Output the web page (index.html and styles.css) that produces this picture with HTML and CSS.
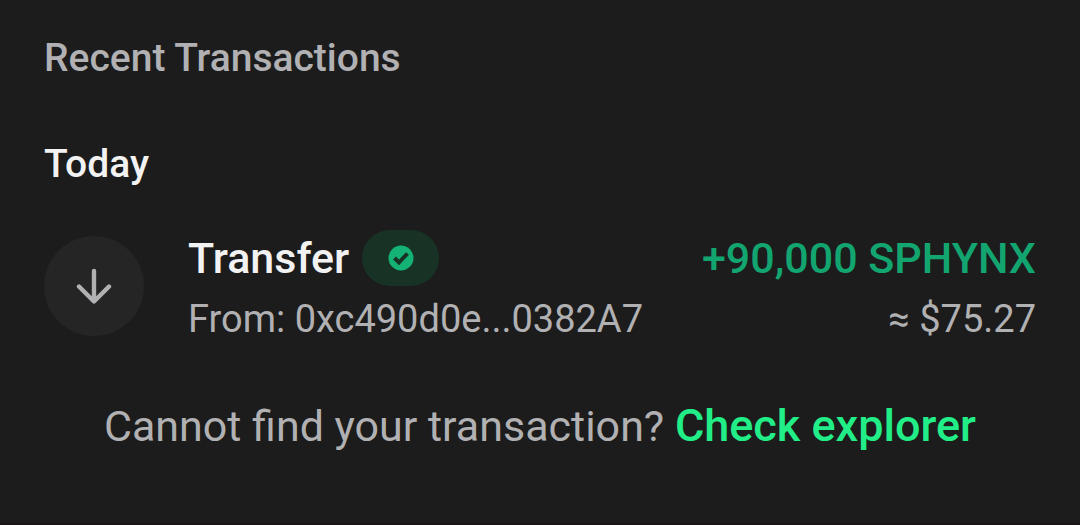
FILE: index.html
```html
<!DOCTYPE html>
<html lang="en">
<head>
    <meta charset="UTF-8">
    <meta name="viewport" content="width=device-width, initial-scale=1.0">
    <title>Recent Transactions</title>
    <link rel="stylesheet" href="styles.css">
</head>
<body>
    <main class="transactions">
        <h1 class="title">Recent Transactions</h1>
        <h2 class="day">Today</h2>

        <ul class="list">
            <li class="item">
                <span class="item-icon">
                    <svg width="36" height="36" viewBox="0 0 36 36" fill="none" stroke="currentColor" stroke-width="4.4" stroke-linecap="round" stroke-linejoin="round" aria-hidden="true">
                        <path d="M18 3v30M3 18.500l15 15 15-15"/>
                    </svg>
                </span>
                <div class="item-info">
                    <div class="item-name">
                        <span>Transfer</span>
                        <span class="badge">
                            <svg width="26" height="26" viewBox="0 0 26 26" aria-hidden="true">
                                <circle class="badge-disc" cx="13" cy="13" r="12.5"/>
                                <path class="badge-check" d="M6.500 13l4.500 4.500 8.500-9"/>
                            </svg>
                        </span>
                    </div>
                    <p class="item-detail">From: 0xc490d0e...0382A7</p>
                </div>
                <div class="item-amount">
                    <p class="amount">+90,000 SPHYNX</p>
                    <p class="item-detail">≈ $75.27</p>
                </div>
            </li>
        </ul>

        <p class="help">Cannot find your transaction? <a class="help-link" href="#">Check explorer</a></p>
    </main>
</body>
</html>
```
FILE: styles.css
```css
*,::before,::after {
    box-sizing: border-box;
}
body {
    margin: 0;
    font-family: Roboto, sans-serif;
    background-color: #1c1c1c;
    color: #b1b1b3;
}
h1, h2, p, ul {
    margin: 0;
}
ul {
    padding: 0;
    list-style: none;
}
a {
    text-decoration: none;
}
.transactions {
    min-height: 100vh;
    padding: 32px 44px;
    border-bottom: 2px solid #1b1518;
}
.title, .day {
    font-size: 39px;
    line-height: 52px;
    font-weight: 500;
}
.title {
    margin-bottom: 54px;
}
.day {
    margin-bottom: 40px;
    color: #f2f2f2;
}
.item {
    display: flex;
    align-items: center;
    gap: 44px;
}
.item-icon {
    display: flex;
    align-items: center;
    justify-content: center;
    flex: none;
    width: 100px;
    height: 100px;
    border-radius: 50%;
    background-color: #252525;
}
.item-info {
    flex: 1;
}
.item-name {
    display: flex;
    align-items: center;
    gap: 13px;
    font-size: 43px;
    line-height: 56px;
    font-weight: 500;
    color: #f2f2f2;
}
.badge {
    display: flex;
    align-items: center;
    justify-content: center;
    width: 77px;
    height: 56px;
    border-radius: 28px;
    background-color: #183326;
}
.badge-disc {
    fill: #14b274;
}
.badge-check {
    fill: none;
    stroke: #183326;
    stroke-width: 4;
}
.item-detail {
    margin-top: 10px;
    font-size: 38px;
    line-height: 46px;
}
.item-amount {
    text-align: right;
}
.amount {
    font-size: 43px;
    line-height: 56px;
    font-weight: 500;
    color: #13a570;
}
.help {
    margin-top: 56px;
    font-size: 43px;
    line-height: 56px;
    text-align: center;
}
.help-link {
    font-size: 45px;
    font-weight: 500;
    color: #22ee88;
}
```
